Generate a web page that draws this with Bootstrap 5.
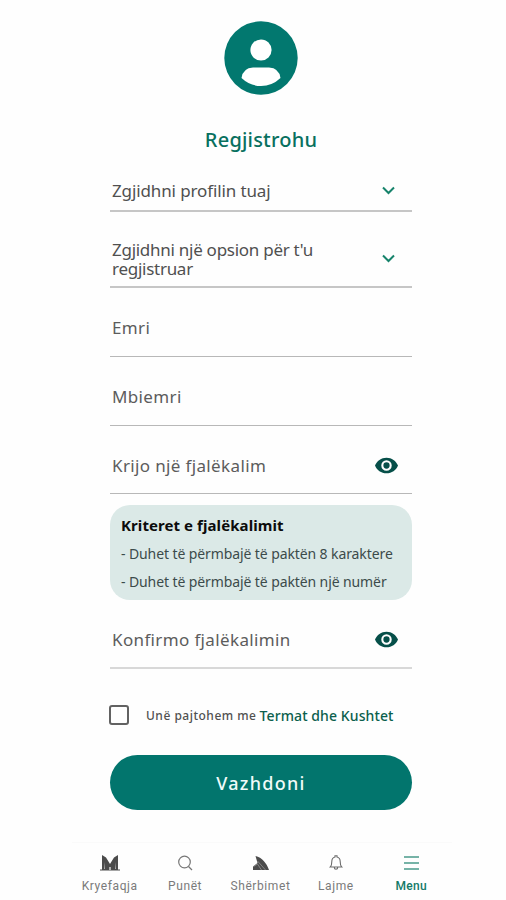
<!DOCTYPE html>
<html lang="sq">
<head>
<meta charset="utf-8">
<meta name="viewport" content="width=device-width, initial-scale=1">
<title>Regjistrohu</title>
<link href="https://cdn.jsdelivr.net/npm/bootstrap@5.3.0/dist/css/bootstrap.min.css" rel="stylesheet">
<style>
body{font-family:"Noto Sans","Open Sans",sans-serif;background:#fefefe;height:900px;overflow:hidden}
.signup{width:302px;margin-left:110px;height:842px;padding-top:21px}
.avatar{width:74px;height:74px}
.title{font-size:20px;line-height:28px;color:#08705f;font-weight:500;margin-top:31px;letter-spacing:.2px}
.field{border-bottom:2px solid #c6c6c6;color:#5c5c5c;font-size:17px;line-height:19px;padding:0 14px 0 2px;letter-spacing:.36px}
.thin{border-bottom:1.5px solid #b8b8b8}
.f1{height:58px;padding-top:17px;letter-spacing:-.12px}
.f2{height:76px;padding-top:20px;letter-spacing:-.27px}
.f3{height:69px;padding-top:11px}
.f4{height:69px;padding-top:10px}
.f5{height:68px;padding-top:11px}
.f6{height:69px;padding-top:11px;border-color:#d8d8d8}
.dark{color:#505050}
.chevron{margin-right:1px}
.criteria{background:#dbe9e7;border-radius:20px;height:95px;margin-top:11px;padding:10px 11px;color:#3c4b4b;font-size:14px;line-height:28px;letter-spacing:-.1px}
.criteria h2{font-size:15px;line-height:20px;font-weight:700;color:#0c0c0c;margin:0 0 5px;letter-spacing:.08px}
.terms{height:20px;margin-top:36px;color:#505050}
.tick{width:20px;height:20px;border:2px solid #626262;border-radius:3px;margin:0 17px 0 -1px}
.terms-text{font-size:12px;font-weight:500;letter-spacing:.5px;padding-top:2px}
.terms-link{font-size:14px;font-weight:500;color:#0b5f4d;letter-spacing:.1px;margin-left:3px}
.go{height:55px;margin-top:30px;padding-top:8px;background:#02756d;color:#f0fbf9;font-size:18px;font-weight:500;letter-spacing:1.3px}
.go:hover{background:#02645d;color:#fff}
.tabs{width:380px;margin-left:72px;height:58px;padding-top:11px;border-top:1px solid #fafafa;font-family:Roboto,sans-serif;font-size:12px;line-height:16px;letter-spacing:.6px;color:#7a7a7a}
.tabs a{width:75.4px;color:inherit}
.tabs svg{margin-bottom:6px}
.tabs a.on{color:#137a67;font-weight:500;letter-spacing:.35px}
</style>
</head>
<body>
<main class="signup d-flex flex-column">
  <svg class="avatar align-self-center flex-shrink-0" viewBox="0 0 74 74"><circle cx="37" cy="37" r="36.7" fill="#02786f"/><circle cx="37" cy="29" r="10.6" fill="#fff"/><path d="M17.500 57Q19 47 29 46.500H45Q55 47 56.500 57Q48 65 37 65T17.500 57Z" fill="#fff"/></svg>
  <h1 class="title text-center mb-0">Regjistrohu</h1>
  <div class="field dark f1 d-flex justify-content-between align-items-center"><span>Zgjidhni profilin tuaj</span><svg class="chevron" width="17" height="12" viewBox="0 0 17 12" fill="none" stroke="#16836b" stroke-width="2"><path d="M3 2.500l5.500 5.500L14 2.500"/></svg></div>
  <div class="field dark f2 d-flex justify-content-between align-items-center"><span>Zgjidhni një opsion për t'u<br>regjistruar</span><svg class="chevron" width="17" height="12" viewBox="0 0 17 12" fill="none" stroke="#16836b" stroke-width="2"><path d="M3 2.500l5.500 5.500L14 2.500"/></svg></div>
  <div class="field thin f3 d-flex align-items-center">Emri</div>
  <div class="field thin f4 d-flex align-items-center">Mbiemri</div>
  <div class="field thin f5 d-flex justify-content-between align-items-center"><span>Krijo një fjalëkalim</span><svg width="23" height="17" viewBox="1 4 22 16" fill="#064f49"><path d="M12 4.500C7 4.500 2.730 7.610 1 12c1.730 4.390 6 7.500 11 7.500s9.270-3.110 11-7.500c-1.730-4.390-6-7.500-11-7.500zM12 17a5 5 0 1 1 0-10 5 5 0 0 1 0 10zm0-8a3 3 0 1 0 0 6 3 3 0 0 0 0-6z"/></svg></div>
  <section class="criteria">
    <h2>Kriteret e fjalëkalimit</h2>
    <div>- Duhet të përmbajë të paktën 8 karaktere</div>
    <div>- Duhet të përmbajë të paktën një numër</div>
  </section>
  <div class="field f6 d-flex justify-content-between align-items-center"><span>Konfirmo fjalëkalimin</span><svg width="23" height="17" viewBox="1 4 22 16" fill="#064f49"><path d="M12 4.500C7 4.500 2.730 7.610 1 12c1.730 4.390 6 7.500 11 7.500s9.270-3.110 11-7.500c-1.730-4.390-6-7.500-11-7.500zM12 17a5 5 0 1 1 0-10 5 5 0 0 1 0 10zm0-8a3 3 0 1 0 0 6 3 3 0 0 0 0-6z"/></svg></div>
  <div class="terms d-flex align-items-center text-nowrap"><span class="tick flex-shrink-0"></span><span class="terms-text">Unë pajtohem me</span><a href="#" class="terms-link text-decoration-none">Termat dhe Kushtet</a></div>
  <button class="btn go rounded-pill border-0 w-100" type="button">Vazhdoni</button>
</main>
<nav class="tabs d-flex text-center">
  <a href="#" class="text-decoration-none d-flex flex-column align-items-center"><svg width="22" height="18" viewBox="0 0 22 18" fill="#4c4c4c"><path d="M3 1l4 2.500 4 6.500 4-6.500L19 1v14.500h2v1H1v-1h2z"/><path d="M10.300 13h1.400v3h-1.400zM6 8v7h-.7zM16 8v7h.7z" fill="#ddd"/></svg><span>Kryefaqja</span></a>
  <a href="#" class="text-decoration-none d-flex flex-column align-items-center"><svg width="18" height="18" viewBox="0 0 18 18" fill="none" stroke="#777" stroke-width="1.200"><circle cx="8.500" cy="8" r="5.800"/><path d="M12.500 12.500l3.500 3.500"/></svg><span>Punët</span></a>
  <a href="#" class="text-decoration-none d-flex flex-column align-items-center"><svg width="18" height="18" viewBox="0 0 18 18" fill="#4c4c4c"><path d="M4.500 2C11 3.500 15.500 9 18 16H2V12.500L6.500 9z"/><path d="M2.500 12.500l4-2.500 4 6M6.500 7l8 9" fill="none" stroke="#aaa" stroke-width=".6"/></svg><span>Shërbimet</span></a>
  <a href="#" class="text-decoration-none d-flex flex-column align-items-center"><svg width="18" height="18" viewBox="0 0 18 18" fill="none" stroke="#6c6c6c" stroke-width="1.100"><path d="M8 3V1.800h2V3c2.500.6 3.200 2.300 3.200 4.500 0 3 .2 4.200 1.500 5.500H3.300c1.300-1.300 1.500-2.500 1.500-5.500C4.800 5.300 5.500 3.600 8 3zM7.300 13.500a1.700 1.700 0 0 0 3.400 0"/></svg><span>Lajme</span></a>
  <a href="#" class="on text-decoration-none d-flex flex-column align-items-center"><svg width="18" height="18" viewBox="0 0 18 18" stroke="#4a9b8b" stroke-width="1.300"><path d="M2 3h15M2 9h15M2 15h15"/></svg><span>Menu</span></a>
</nav>
</body>
</html>
